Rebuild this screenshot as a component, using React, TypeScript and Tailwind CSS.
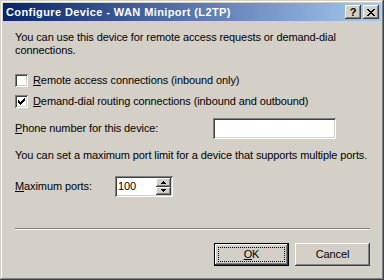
import React from 'react';

const font = { fontFamily: "Tahoma, 'Liberation Sans', Arial, sans-serif" };

const sunken =
  'shadow-[inset_1px_1px_0_#808080,inset_-1px_-1px_0_#ffffff,inset_2px_2px_0_#404040,inset_-2px_-2px_0_#d4d0c8]';
const raised =
  'shadow-[inset_-1px_-1px_0_#404040,inset_1px_1px_0_#ffffff,inset_-2px_-2px_0_#808080,inset_2px_2px_0_#d4d0c8]';

function Checkbox({ checked }: { checked?: boolean }) {
  return (
    <div className={`w-[13px] h-[13px] bg-white shrink-0 flex items-center justify-center ${sunken}`}>
      {checked && (
        <svg width="7" height="7" viewBox="0 0 7 7">
          <path d="M0 2h1v1h1v1h1V3h1V2h1V1h1V0h1v3H6v1H5v1H4v1H3v1H2V6H1V5H0z" fill="#000" />
        </svg>
      )}
    </div>
  );
}

function TitleButton({ children }: { children: React.ReactNode }) {
  return (
    <div
      className={`w-[16px] h-[14px] bg-[#d4d0c8] flex items-center justify-center text-[11px] font-bold leading-none text-black ${raised}`}
    >
      {children}
    </div>
  );
}

export default function App() {
  return (
    <div
      className="w-[384px] h-[280px] bg-[#d4d0c8] p-[3px] flex flex-col text-[11px] tracking-[-0.1px] text-black shadow-[inset_-1px_-1px_0_#404040,inset_1px_1px_0_#d4d0c8,inset_-2px_-2px_0_#808080,inset_2px_2px_0_#ffffff]"
      style={font}
    >
      <div className="h-[18px] flex items-center pl-[3px] pr-[2px] bg-[linear-gradient(to_right,#0a246a,#a6caf0)]">
        <span className="text-white font-bold text-[11px] tracking-[0.4px] flex-1">
          Configure Device - WAN Miniport (L2TP)
        </span>
        <div className="flex">
          <TitleButton>?</TitleButton>
          <div className="w-[2px]" />
          <TitleButton>
            <svg width="8" height="7" viewBox="0 0 8 7">
              <path
                d="M0 0h2v1h1v1h2V1h1V0h2v1H7v1H6v1H5v1h1v1h1v1h1v1H6V6H5V5H3v1H2v1H0V6h1V5h1V4h1V3H2V2H1V1H0z"
                fill="#000"
              />
            </svg>
          </TitleButton>
        </div>
      </div>

      <div className="flex-1 flex flex-col pl-[12px] pr-[8px] pt-[10px]">
        <p className="leading-[13px] pr-[3px]">
          You can use this device for remote access requests or demand-dial connections.
        </p>

        <div className="flex items-center gap-[5px] mt-[17px] h-[13px]">
          <Checkbox />
          <span>
            <u>R</u>emote access connections (inbound only)
          </span>
        </div>
        <div className="flex items-center gap-[5px] mt-[8px] h-[13px]">
          <Checkbox checked />
          <span>
            <u>D</u>emand-dial routing connections (inbound and outbound)
          </span>
        </div>

        <div className="flex items-center mt-[10px] h-[21px]">
          <span className="w-[198px]">
            <u>P</u>hone number for this device:
          </span>
          <div className={`w-[123px] h-[21px] bg-white ${sunken}`} />
        </div>

        <p className="mt-[10px] leading-[13px] whitespace-nowrap">
          You can set a maximum port limit for a device that supports multiple ports.
        </p>

        <div className="flex items-center mt-[14px] h-[21px]">
          <span className="w-[100px]">
            <u>M</u>aximum ports:
          </span>
          <div className={`w-[58px] h-[21px] bg-white flex items-center p-[2px] ${sunken}`}>
            <span className="flex-1 pl-[1px]">100</span>
            <div className="flex flex-col w-[15px] h-[17px]">
              <div className={`flex-1 bg-[#d4d0c8] flex items-center justify-center ${raised}`}>
                <svg width="5" height="3" viewBox="0 0 5 3">
                  <path d="M2 0h1v1h1v1h1v1H0V2h1V1h1z" fill="#000" />
                </svg>
              </div>
              <div className={`flex-1 bg-[#d4d0c8] flex items-center justify-center ${raised}`}>
                <svg width="5" height="3" viewBox="0 0 5 3">
                  <path d="M0 0h5v1H4v1H3v1H2V2H1V1H0z" fill="#000" />
                </svg>
              </div>
            </div>
          </div>
        </div>

        <div className="mt-[31px] mr-[3px] h-[2px] border-t border-[#808080] border-b border-b-white" />

        <div className="flex justify-end gap-[6px] mt-[13px] mr-[3px]">
          <div className="w-[75px] h-[23px] border border-black">
            <div className={`w-full h-full flex items-center justify-center p-[3px] ${raised}`}>
              <div className="w-full h-full border border-dotted border-black flex items-center justify-center">
                <span>
                  <u>O</u>K
                </span>
              </div>
            </div>
          </div>
          <div className={`w-[75px] h-[23px] flex items-center justify-center ${raised}`}>Cancel</div>
        </div>
      </div>
    </div>
  );
}
